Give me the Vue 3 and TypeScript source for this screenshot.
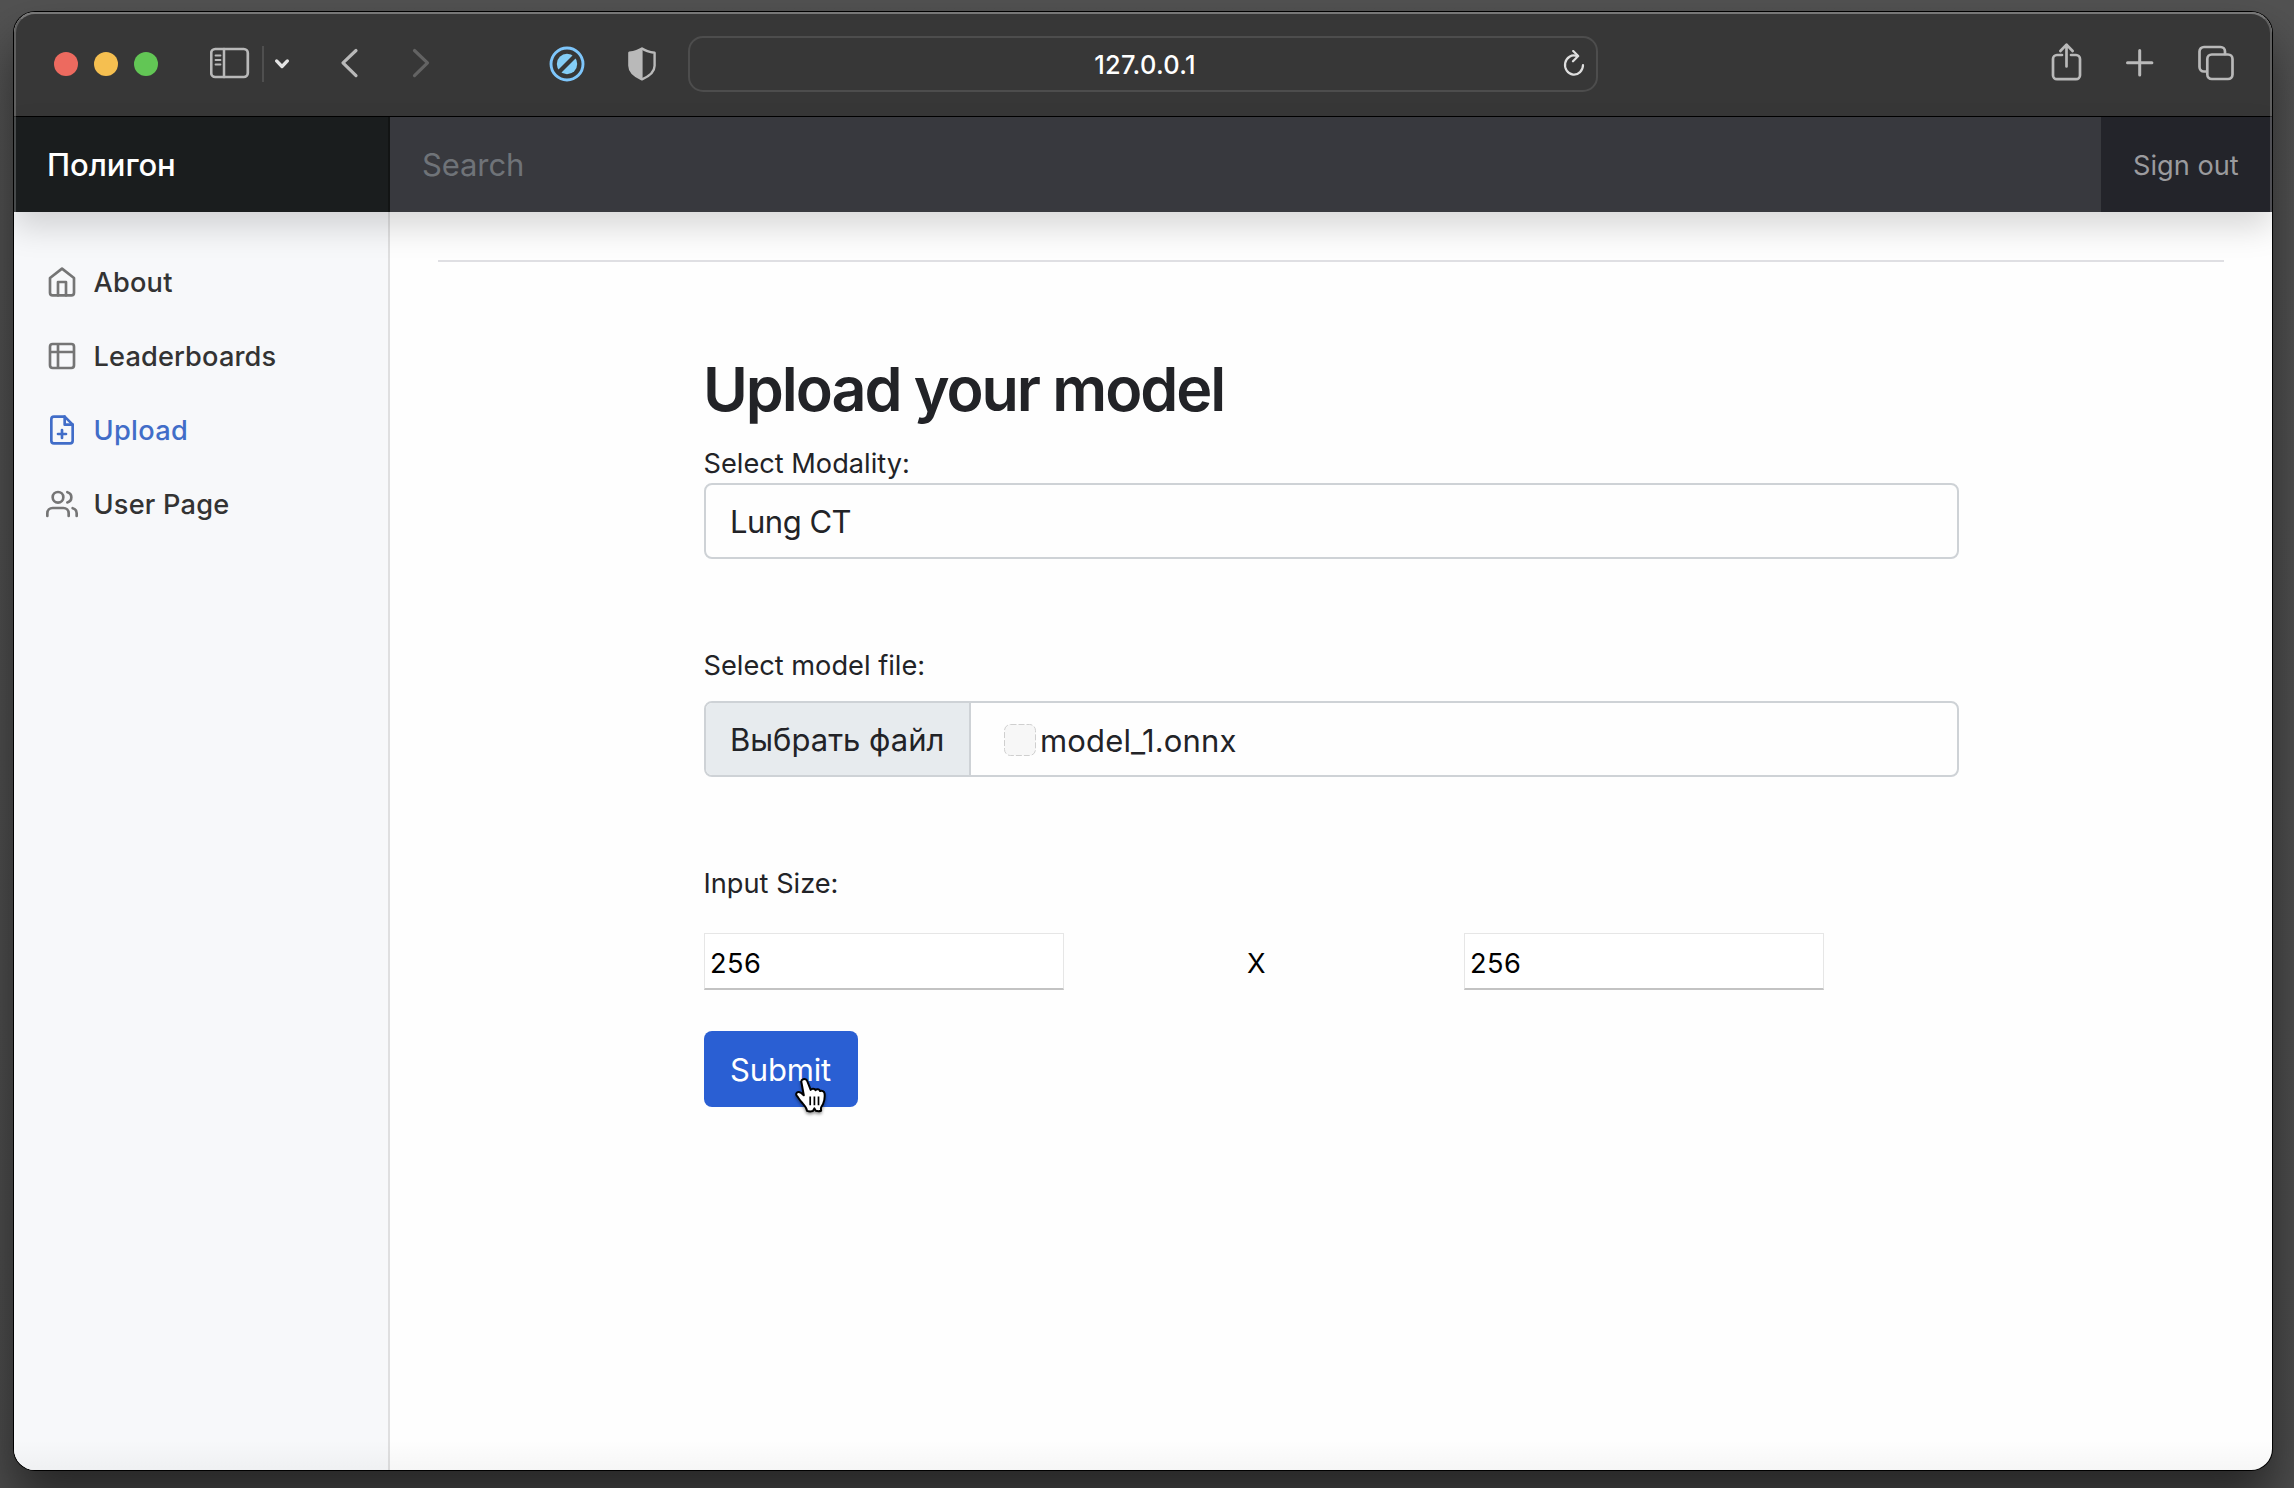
<script setup lang="ts">
import { ref } from 'vue'

interface NavItem {
  label: string
  paths: string[]
  active?: boolean
  spacing: string
}

const navItems: NavItem[] = [
  {
    label: 'About',
    paths: ['M3 9l9-7 9 7v11a2 2 0 0 1-2 2H5a2 2 0 0 1-2-2z', 'M9 22V12h6v10'],
    spacing: '0.2px',
  },
  {
    label: 'Leaderboards',
    paths: [
      'M9 3H5a2 2 0 0 0-2 2v4m6-6h10a2 2 0 0 1 2 2v4M9 3v18m0 0h10a2 2 0 0 0 2-2V9M9 21H5a2 2 0 0 1-2-2V9m0 0h18',
    ],
    spacing: '0.14px',
  },
  {
    label: 'Upload',
    paths: [
      'M14 2H6a2 2 0 0 0-2 2v16a2 2 0 0 0 2 2h12a2 2 0 0 0 2-2V8z',
      'M14 2v6h6',
      'M12 18v-6',
      'M9 15h6',
    ],
    active: true,
    spacing: '0.3px',
  },
  {
    label: 'User Page',
    paths: [
      'M17 21v-2a4 4 0 0 0-4-4H5a4 4 0 0 0-4 4v2',
      'M13 7a4 4 0 1 1-8 0a4 4 0 1 1 8 0',
      'M23 21v-2a4 4 0 0 0-3-3.87',
      'M16 3.13a4 4 0 0 1 0 7.75',
    ],
    spacing: '0.2px',
  },
]

const width = ref('256')
const height = ref('256')
</script>

<template>
  <div class="desktop">
    <div class="window">
      <header class="toolbar">
        <div class="lights">
          <span class="light red"></span>
          <span class="light yellow"></span>
          <span class="light green"></span>
        </div>
        <svg class="ico sidebar-ico" width="40" height="36" viewBox="0 0 40 36">
          <rect x="1.2" y="3" width="36.6" height="28" rx="4" stroke-width="2.7" />
          <path d="M14 3v28" stroke-width="2.5" />
          <path d="M5.5 9.500h5M5.500 14h5M5.500 18.500h5" stroke-width="1.800" />
        </svg>
        <span class="separator"></span>
        <svg class="ico chevron" width="16" height="36" viewBox="0 0 16 36">
          <path d="M2.600 14.900L8 20.500l5.400-5.600" stroke-width="3.300" />
        </svg>
        <svg class="ico back" width="20" height="36" viewBox="0 0 20 36">
          <path d="M16 4.500L3 16.800 16 29.600" stroke-width="3.200" />
        </svg>
        <svg class="ico forward" width="20" height="36" viewBox="0 0 20 36">
          <path d="M3.500 4.500l13 12.300-13 12.800" stroke-width="3.200" />
        </svg>
        <svg class="blocker" width="38" height="38" viewBox="0 0 38 38">
          <circle cx="19" cy="19" r="16" fill="none" stroke="#7ec6fb" stroke-width="2.900" />
          <circle cx="19" cy="19" r="10.200" fill="#84cdf6" />
          <path d="M9.500 28.500l19-19" stroke="#373737" stroke-width="4.200" />
        </svg>
        <svg class="shield" width="32" height="38" viewBox="0 0 32 38">
          <path
            d="M16 3.400c3.600 2.400 7.600 3.500 12.600 4.300v13c0 6.200-6.600 11-12.600 13.600C10 31.700 3.400 26.900 3.400 20.700v-13C8.400 6.900 12.400 5.800 16 3.400z"
            fill="none" stroke="#b9b9b9" stroke-width="2.400" stroke-linejoin="round"
          />
          <path d="M16.600 3.400C12.400 5.800 8.400 6.900 3.400 7.700v13c0 6.200 6.600 11 13.200 13.600z" fill="#b9b9b9" />
        </svg>
        <div class="address">
          <span class="url">127.0.0.1</span>
          <svg class="reload" width="24" height="30" viewBox="0 0 24 30">
            <path d="M21 15a9 9.600 0 1 1-6.200-9.100" />
            <path d="M11.200 1l5 5-5.200 5.300" />
          </svg>
        </div>
        <svg class="ico share" width="34" height="42" viewBox="0 0 34 42">
          <path d="M12 12H7a4 4 0 0 0-4 4v16.200a4 4 0 0 0 4 4h19a4 4 0 0 0 4-4V16a4 4 0 0 0-4-4h-5" stroke-width="2.700" />
          <path d="M16.500 23.500V2M10.400 8l6.100-6.400L22.600 8" stroke-width="2.700" />
        </svg>
        <svg class="ico plus" width="32" height="32" viewBox="0 0 32 32">
          <path d="M15.700 2.500v24.400M3.500 14.700h24.400" stroke-width="3" />
        </svg>
        <svg class="ico tabs" width="38" height="38" viewBox="0 0 38 38">
          <path d="M9.500 26.500H7a4.500 4.500 0 0 1-4.500-4.500V6.500A4.500 4.500 0 0 1 7 2h16.500A4.500 4.500 0 0 1 28 6.500V9" stroke-width="2.700" />
          <rect x="10.300" y="9.500" width="25.200" height="24.500" rx="4.500" stroke-width="2.700" />
        </svg>
      </header>

      <nav class="navbar">
        <a class="brand">Полигон</a>
        <div class="search">Search</div>
        <a class="signout">Sign out</a>
      </nav>

      <div class="page">
        <aside class="sidebar">
          <a v-for="item in navItems" :key="item.label" class="nav-link" :class="{ active: item.active }">
            <svg class="feather" width="32" height="32" viewBox="0 0 24 24">
              <path v-for="p in item.paths" :key="p" :d="p" />
            </svg>
            <span :style="{ letterSpacing: item.spacing }">{{ item.label }}</span>
          </a>
        </aside>

        <main class="main">
          <div class="rule"></div>
          <form class="form" @submit.prevent>
            <h1>Upload your model</h1>
            <label class="label">Select Modality:</label>
            <div class="select">Lung CT</div>

            <label class="label file-label">Select model file:</label>
            <div class="file">
              <span class="file-button">Выбрать файл</span>
              <svg class="file-icon" width="34" height="34" viewBox="0 0 34 34">
                <rect x="1.500" y="1.500" width="31" height="31" rx="6" />
              </svg>
              <span class="file-name">model_1.onnx</span>
            </div>

            <label class="label size-label">Input Size:</label>
            <div class="sizes">
              <input v-model="width" class="size" type="text" />
              <span class="times">X</span>
              <input v-model="height" class="size" type="text" />
            </div>

            <button class="submit" type="submit">
              Submit
              <svg class="pointer" width="36" height="40" viewBox="0 0 36 40">
                <path
                  d="M9.200 3.300c2-.8 3.500.3 4.200 2.200l3.300 8.400c.8-1.600 4-1.700 4.800.3 1.100-1.500 4-1.100 4.600.9 1.600-1 4.300 0 4.500 2.500.4 4.100-.2 7.400-1.500 10.200-.8 1.800-2.100 3-2.200 4.400l.2 2.500c-1.600.6-3.800.5-5.300.1l-1.400-2.400-1.500 2.700c-1.900.4-4.100.4-5.900-.2-.4-3.900-3-5.800-5.600-8.900-1.700-2.100-3.400-4.700-4.700-6.300-1.100-1.500-.3-3.300 1.500-3.700 2-.4 4 1.500 5.600 3.300L7.500 6.700c-.5-1.500.2-2.900 1.700-3.400z"
                  fill="#fff" stroke="#000" stroke-width="2" stroke-linejoin="round"
                />
                <path d="M16.200 20.500v8.800M20.400 20.500v8.800M24.500 20.500v8.800" stroke="#000" stroke-width="1.700" />
              </svg>
            </button>
          </form>
        </main>
      </div>
    </div>
  </div>
</template>

<style>
html,
body {
  margin: 0;
  background: #444;
}
</style>

<style scoped>
* {
  box-sizing: border-box;
}

.desktop {
  width: 2294px;
  height: 1488px;
  padding: 12px 22px 18px 14px;
  display: flex;
  overflow: hidden;
  background: linear-gradient(#525252, #4c4c4c);
  font-family: Inter, 'Liberation Sans', sans-serif;
  font-weight: 430;
}

.window {
  position: relative;
  flex: 1;
  display: flex;
  flex-direction: column;
  overflow: hidden;
  border-radius: 21px;
  background: #fefefe;
  box-shadow: 0 0 0 1px #000, 0 30px 50px rgba(0, 0, 0, 0.5);
}

.window::before {
  content: '';
  position: absolute;
  z-index: 5;
  inset: 0 0 auto 0;
  height: 200px;
  border: 2px solid rgba(255, 255, 255, 0.2);
  border-top-color: rgba(255, 255, 255, 0.32);
  border-bottom: 0;
  border-radius: 21px 21px 0 0;
  pointer-events: none;
}

.toolbar {
  display: flex;
  align-items: center;
  flex: none;
  height: 105px;
  padding-left: 40px;
  background: #373737;
  border-bottom: 1px solid #000;
}

.toolbar > * {
  flex: none;
}

.lights {
  display: flex;
  gap: 16px;
}

.light {
  width: 24px;
  height: 24px;
  border-radius: 50%;
}

.red {
  background: #ed6a5f;
}

.yellow {
  background: #f5bf50;
}

.green {
  background: #62c655;
}

.ico {
  fill: none;
  stroke: #b9b9b9;
  stroke-linecap: round;
  stroke-linejoin: round;
}

.sidebar-ico {
  margin-left: 52px;
}

.separator {
  width: 2px;
  height: 36px;
  margin-left: 12px;
  background: #4f4f4f;
}

.chevron {
  margin-left: 10px;
  stroke: #e3e3e3;
}

.back {
  margin-left: 50px;
}

.forward {
  margin-left: 51px;
  stroke: #636363;
}

.blocker {
  margin-left: 117px;
}

.shield {
  margin-left: 40px;
}

.address {
  display: grid;
  grid-template-columns: 1fr auto 1fr;
  align-items: center;
  width: 910px;
  height: 56px;
  margin-left: 30px;
  padding-right: 10px;
  padding-left: 14px;
  border: 2px solid #4d4d4d;
  border-radius: 15px;
}

.url {
  grid-column: 2;
  color: #fff;
  font-size: 25.4px;
  font-weight: 500;
  line-height: 54px;
  letter-spacing: 0.27px;
}

.reload {
  justify-self: end;
  fill: none;
  stroke: #dedede;
  stroke-width: 2.2;
  stroke-linecap: round;
  stroke-linejoin: round;
}

.share {
  margin-left: 452px;
}

.plus {
  margin-left: 40px;
}

.tabs {
  margin-left: 41px;
}

.navbar {
  position: relative;
  z-index: 2;
  display: flex;
  flex: none;
  height: 95px;
  line-height: 95px;
  background: #23242a;
  box-shadow: 0 16px 32px rgba(0, 0, 0, 0.15);
}

.brand {
  width: 376px;
  padding-left: 33px;
  color: #fff;
  font-size: 31px;
  font-weight: 500;
  letter-spacing: -0.05px;
  background: #1a1d1e;
  box-shadow: inset -2px 0 0 rgba(0, 0, 0, 0.3);
}

.search {
  flex: 1;
  padding-left: 32px;
  color: #6f7378;
  font-size: 31px;
  letter-spacing: -0.1px;
  background: #38393e;
}

.signout {
  width: 171px;
  padding-left: 32px;
  color: #9b9b9e;
  font-size: 27.2px;
  line-height: 97px;
  height: 95px;
}

.page {
  position: relative;
  display: flex;
  flex: 1;
}

.page::after {
  content: '';
  position: absolute;
  inset: auto 0 0 0;
  height: 30px;
  background: linear-gradient(transparent, rgba(0, 0, 0, 0.03));
  pointer-events: none;
}

.sidebar {
  width: 376px;
  padding-top: 33px;
  background: #f7f8fa;
  border-right: 2px solid #dfdfe0;
}

.nav-link {
  display: flex;
  align-items: center;
  gap: 15.5px;
  height: 74px;
  padding-left: 32px;
  color: #333;
  font-size: 27.2px;
  font-weight: 500;
}

.feather {
  fill: none;
  stroke: #757575;
  stroke-width: 2;
  stroke-linecap: round;
  stroke-linejoin: round;
}

.active {
  color: #416dc8;
}

.active .feather {
  stroke: #416dc8;
}

.main {
  flex: 1;
  padding: 48px 48px 0;
}

.rule {
  height: 2px;
  background: #dfdfe3;
}

.form {
  display: flex;
  flex-direction: column;
  width: 1255px;
  margin: 89px 0 0 266px;
  color: #222327;
}

h1 {
  margin: 0 0 14px -1px;
  font-size: 61px;
  font-weight: 560;
  line-height: 77px;
  letter-spacing: -2.05px;
}

.label {
  margin-left: -0.5px;
  font-size: 27.2px;
  line-height: 43px;
  letter-spacing: 0;
}

.select,
.file {
  display: flex;
  height: 76px;
  font-size: 31px;
  line-height: 73px;
  border: 2px solid #ced2d6;
  border-radius: 8px;
}

.select {
  margin-top: -2px;
  padding-left: 24px;
  letter-spacing: -0.5px;
}

.file-label {
  margin-top: 85px;
  line-height: 44px;
}

.file {
  align-items: center;
  margin-top: 13px;
  overflow: hidden;
}

.file-button {
  width: 265px;
  height: 72px;
  padding-left: 24px;
  line-height: 73px;
  letter-spacing: 0;
  background: #e7ebee;
  border-right: 2px solid #ced2d6;
}

.file-icon {
  margin: 1px 0 0 32px;
}

.file-icon rect {
  fill: #f7f7f7;
  stroke: #cfcfcf;
  stroke-width: 1;
  stroke-dasharray: 6 2;
}

.file-name {
  margin-left: 3px;
  padding-top: 2px;
  letter-spacing: 0.15px;
}

.size-label {
  margin-top: 85px;
  line-height: 44px;
}

.sizes {
  display: flex;
  height: 57px;
  margin-top: 27px;
  color: #000;
  font-size: 27.2px;
}

.size {
  width: 360px;
  margin: 0;
  padding: 4px 0 0 5px;
  color: #000;
  font: inherit;
  letter-spacing: 0.4px;
  background: #fff;
  border: 1px solid #e6e6e6;
  border-bottom: 2px solid #c3c3c3;
  outline: none;
}

.times {
  width: 216px;
  margin-left: 183px;
  line-height: 61px;
}

.times + .size {
  margin-left: 1px;
}

.submit {
  position: relative;
  width: 154px;
  height: 76px;
  margin-top: 41px;
  padding: 0 1px 0 0;
  color: #fff;
  font-family: inherit;
  font-size: 31px;
  font-weight: 430;
  line-height: 77px;
  letter-spacing: -0.2px;
  background: #2a5fd3;
  border: 0;
  border-radius: 8px;
}

.pointer {
  position: absolute;
  top: 45px;
  left: 90px;
  filter: drop-shadow(0 2px 1.5px rgba(0, 0, 0, 0.4));
}
</style>
